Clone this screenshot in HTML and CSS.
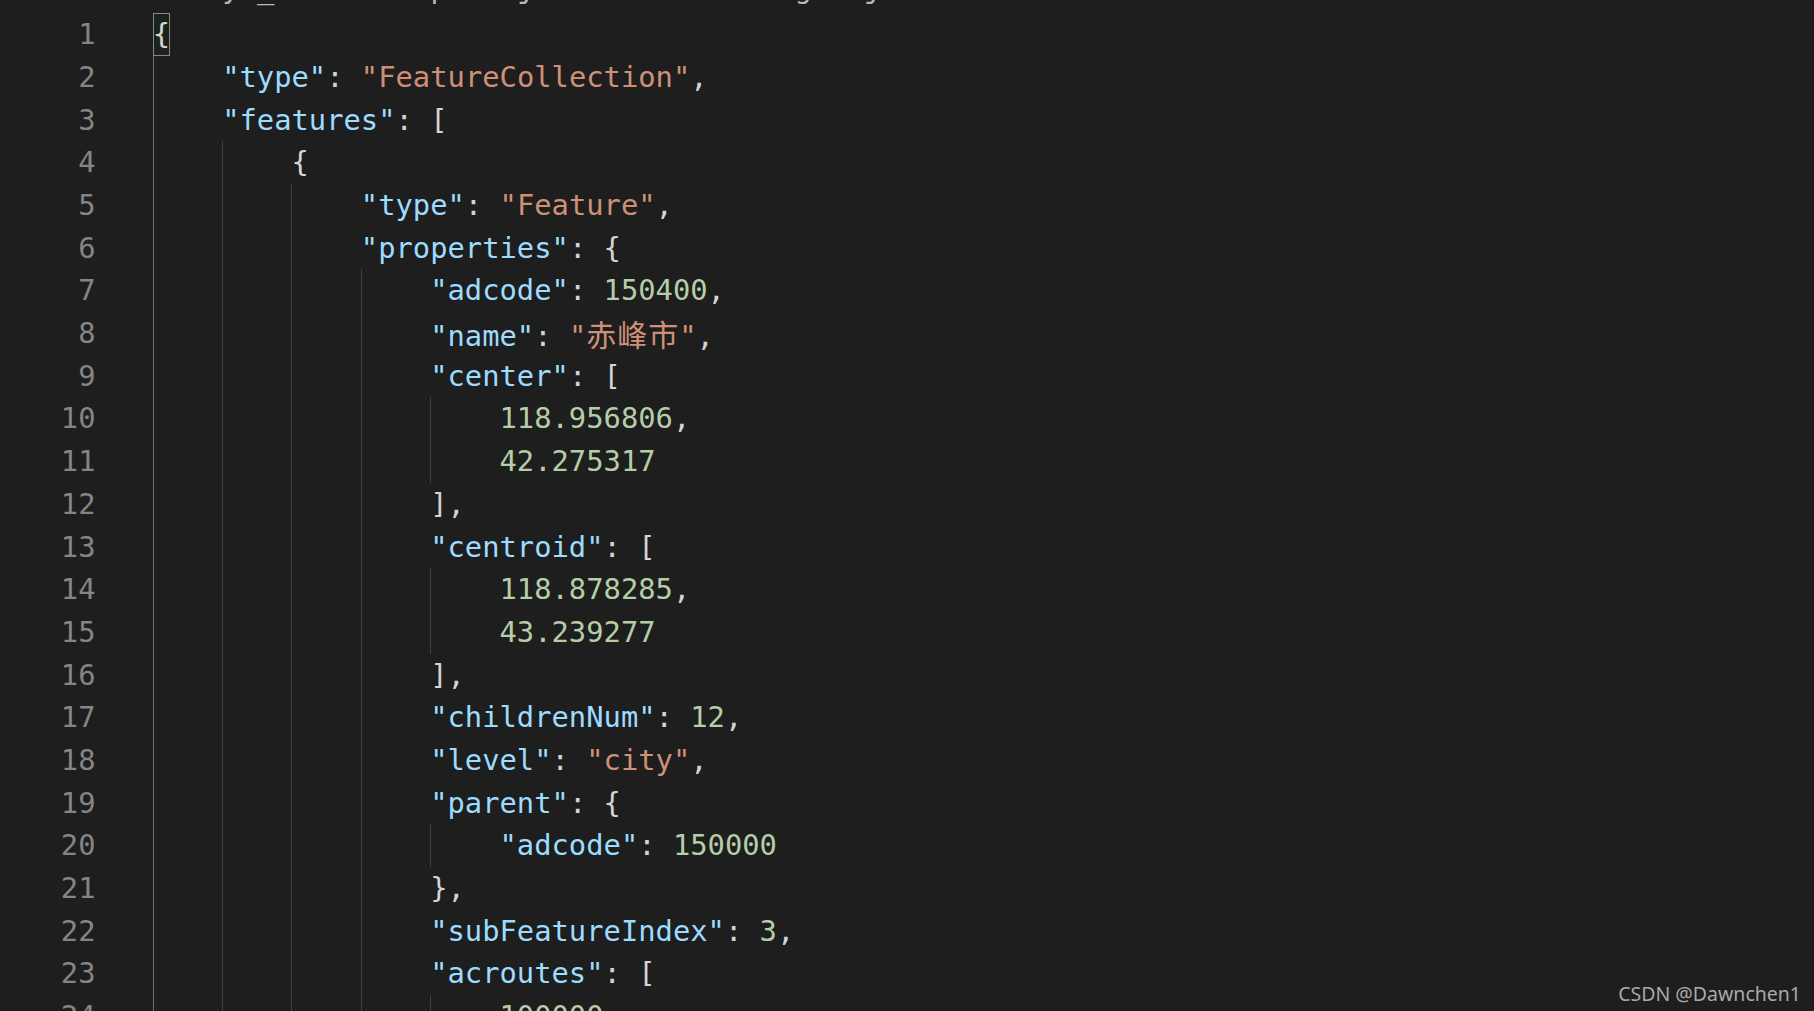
FILE: index.html
```html
<!DOCTYPE html>
<html lang="zh-CN">
<head>
<meta charset="utf-8">
<title>geojson</title>
<link rel="stylesheet" href="styles.css">
</head>
<body>
<div class="editor">
  <div class="crumbs"><div class="crumb-tx">mocky-_data &gt; amp &gt; ojs &gt; 150400.areageo.json</div></div>
  <div class="lines">
    <div class="line"><div class="ln">1</div><div class="code"><span class="bm">{</span></div></div>
    <div class="line"><div class="ln">2</div><div class="code"><span class="ig act"></span><span class="tx"><span class="k">"type"</span>: <span class="s">"FeatureCollection"</span>,</span></div></div>
    <div class="line"><div class="ln">3</div><div class="code"><span class="ig act"></span><span class="tx"><span class="k">"features"</span>: [</span></div></div>
    <div class="line"><div class="ln">4</div><div class="code"><span class="ig act"></span><span class="ig"></span><span class="tx">{</span></div></div>
    <div class="line"><div class="ln">5</div><div class="code"><span class="ig act"></span><span class="ig"></span><span class="ig"></span><span class="tx"><span class="k">"type"</span>: <span class="s">"Feature"</span>,</span></div></div>
    <div class="line"><div class="ln">6</div><div class="code"><span class="ig act"></span><span class="ig"></span><span class="ig"></span><span class="tx"><span class="k">"properties"</span>: {</span></div></div>
    <div class="line"><div class="ln">7</div><div class="code"><span class="ig act"></span><span class="ig"></span><span class="ig"></span><span class="ig"></span><span class="tx"><span class="k">"adcode"</span>: <span class="n">150400</span>,</span></div></div>
    <div class="line"><div class="ln">8</div><div class="code"><span class="ig act"></span><span class="ig"></span><span class="ig"></span><span class="ig"></span><span class="tx"><span class="k">"name"</span>: <span class="s">"<span class="cjk">赤峰市</span>"</span>,</span></div></div>
    <div class="line"><div class="ln">9</div><div class="code"><span class="ig act"></span><span class="ig"></span><span class="ig"></span><span class="ig"></span><span class="tx"><span class="k">"center"</span>: [</span></div></div>
    <div class="line"><div class="ln">10</div><div class="code"><span class="ig act"></span><span class="ig"></span><span class="ig"></span><span class="ig"></span><span class="ig"></span><span class="tx"><span class="n">118.956806</span>,</span></div></div>
    <div class="line"><div class="ln">11</div><div class="code"><span class="ig act"></span><span class="ig"></span><span class="ig"></span><span class="ig"></span><span class="ig"></span><span class="tx"><span class="n">42.275317</span></span></div></div>
    <div class="line"><div class="ln">12</div><div class="code"><span class="ig act"></span><span class="ig"></span><span class="ig"></span><span class="ig"></span><span class="tx">],</span></div></div>
    <div class="line"><div class="ln">13</div><div class="code"><span class="ig act"></span><span class="ig"></span><span class="ig"></span><span class="ig"></span><span class="tx"><span class="k">"centroid"</span>: [</span></div></div>
    <div class="line"><div class="ln">14</div><div class="code"><span class="ig act"></span><span class="ig"></span><span class="ig"></span><span class="ig"></span><span class="ig"></span><span class="tx"><span class="n">118.878285</span>,</span></div></div>
    <div class="line"><div class="ln">15</div><div class="code"><span class="ig act"></span><span class="ig"></span><span class="ig"></span><span class="ig"></span><span class="ig"></span><span class="tx"><span class="n">43.239277</span></span></div></div>
    <div class="line"><div class="ln">16</div><div class="code"><span class="ig act"></span><span class="ig"></span><span class="ig"></span><span class="ig"></span><span class="tx">],</span></div></div>
    <div class="line"><div class="ln">17</div><div class="code"><span class="ig act"></span><span class="ig"></span><span class="ig"></span><span class="ig"></span><span class="tx"><span class="k">"childrenNum"</span>: <span class="n">12</span>,</span></div></div>
    <div class="line"><div class="ln">18</div><div class="code"><span class="ig act"></span><span class="ig"></span><span class="ig"></span><span class="ig"></span><span class="tx"><span class="k">"level"</span>: <span class="s">"city"</span>,</span></div></div>
    <div class="line"><div class="ln">19</div><div class="code"><span class="ig act"></span><span class="ig"></span><span class="ig"></span><span class="ig"></span><span class="tx"><span class="k">"parent"</span>: {</span></div></div>
    <div class="line"><div class="ln">20</div><div class="code"><span class="ig act"></span><span class="ig"></span><span class="ig"></span><span class="ig"></span><span class="ig"></span><span class="tx"><span class="k">"adcode"</span>: <span class="n">150000</span></span></div></div>
    <div class="line"><div class="ln">21</div><div class="code"><span class="ig act"></span><span class="ig"></span><span class="ig"></span><span class="ig"></span><span class="tx">},</span></div></div>
    <div class="line"><div class="ln">22</div><div class="code"><span class="ig act"></span><span class="ig"></span><span class="ig"></span><span class="ig"></span><span class="tx"><span class="k">"subFeatureIndex"</span>: <span class="n">3</span>,</span></div></div>
    <div class="line"><div class="ln">23</div><div class="code"><span class="ig act"></span><span class="ig"></span><span class="ig"></span><span class="ig"></span><span class="tx"><span class="k">"acroutes"</span>: [</span></div></div>
    <div class="line"><div class="ln">24</div><div class="code"><span class="ig act"></span><span class="ig"></span><span class="ig"></span><span class="ig"></span><span class="ig"></span><span class="tx"><span class="n">100000</span>,</span></div></div>
  </div>
</div>
<div class="watermark">CSDN @Dawnchen1</div>
</body>
</html>
```
FILE: styles.css
```css
html, body {
  margin: 0;
  padding: 0;
  background: #1e1e1e;
  height: 1011px;
  overflow: hidden;
}

.editor {
  font-family: "DejaVu Sans Mono", "Liberation Mono", monospace;
  font-size: 28.8px;
  color: #d4d4d4;
}

.crumbs {
  height: 13.3px;
  overflow: hidden;
  padding-left: 153px;
}

.crumb-tx {
  margin-top: -27.6px;
  line-height: 33.5px;
  white-space: pre;
  color: #b8b8b8;
}

.lines {
  display: flex;
  flex-direction: column;
}

.line {
  display: flex;
  height: 42.7px;
  line-height: 42.7px;
}

.ln {
  flex: none;
  width: 95.5px;
  text-align: right;
  color: #858585;
}

.code {
  display: flex;
  margin-left: 57.3px;
}

.ig {
  flex: none;
  width: 4ch;
  box-sizing: border-box;
  border-left: 1px solid #404040;
}

.ig.act {
  border-left-color: #707070;
}

.tx {
  white-space: pre;
}

.bm {
  width: 1ch;
  outline: 1px solid #888888;
  outline-offset: -1px;
  background: rgba(0, 100, 0, 0.1);
}

.k { color: #9cdcfe; }
.s { color: #ce9178; }
.n { color: #b5cea8; }

.cjk {
  font-family: "Noto Sans CJK SC", sans-serif;
  font-size: 30px;
  letter-spacing: 1px;
}

.watermark {
  position: absolute;
  right: 13px;
  bottom: 4px;
  font-family: "Noto Sans", "Open Sans", sans-serif;
  font-size: 19.5px;
  color: #a9a9a9;
}
```
